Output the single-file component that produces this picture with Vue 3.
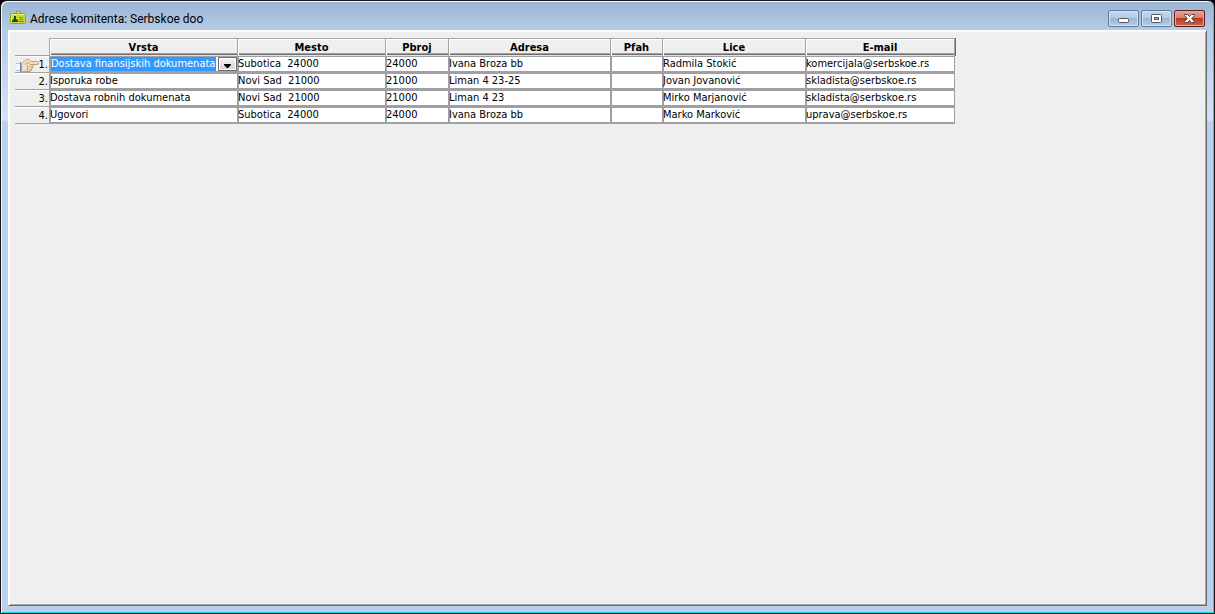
<script setup>
import { ref } from 'vue'

const columns = [
  { key: 'vrsta', label: 'Vrsta' },
  { key: 'mesto', label: 'Mesto' },
  { key: 'pbroj', label: 'Pbroj' },
  { key: 'adresa', label: 'Adresa' },
  { key: 'pfah', label: 'Pfah' },
  { key: 'lice', label: 'Lice' },
  { key: 'email', label: 'E-mail' },
]

const rows = ref([
  { vrsta: 'Dostava finansijskih dokumenata', mesto: 'Subotica  24000', pbroj: '24000', adresa: 'Ivana Broza bb', pfah: '', lice: 'Radmila Stokić', email: 'komercijala@serbskoe.rs' },
  { vrsta: 'Isporuka robe', mesto: 'Novi Sad  21000', pbroj: '21000', adresa: 'Liman 4 23-25', pfah: '', lice: 'Jovan Jovanović', email: 'skladista@serbskoe.rs' },
  { vrsta: 'Dostava robnih dokumenata', mesto: 'Novi Sad  21000', pbroj: '21000', adresa: 'Liman 4 23', pfah: '', lice: 'Mirko Marjanović', email: 'skladista@serbskoe.rs' },
  { vrsta: 'Ugovori', mesto: 'Subotica  24000', pbroj: '24000', adresa: 'Ivana Broza bb', pfah: '', lice: 'Marko Marković', email: 'uprava@serbskoe.rs' },
])
const active = 0
</script>

<template>
  <div class="window">
    <header class="titlebar">
      <svg class="app-icon" width="17" height="15" viewBox="0 0 17 15" aria-hidden="true">
        <path d="M6.500 4V1.500H10.500V4" fill="#e8ee8c" stroke="#8f9e1c" />
        <rect x=".5" y="3.500" width="15" height="10" rx="1" fill="#c6d92c" stroke="#93a51d" />
        <path d="M1.500 12.500V4.500H14.500" fill="none" stroke="#e6ef72" />
        <path d="M2 12V10L4 9V6H6V9L8 10V12Z" fill="#21451c" />
        <path d="M9 7.500H13M9 9.500H13M9 11.500H14" stroke="#6f8c22" />
      </svg>
      <h1>Adrese komitenta: Serbskoe doo</h1>
      <div class="controls">
        <button type="button" aria-label="Minimize">
          <svg width="13" height="13" viewBox="0 0 13 13"><rect x="1.500" y="6.500" width="10" height="4" rx="1" fill="#fff" stroke="#53565f" /></svg>
        </button>
        <button type="button" aria-label="Maximize">
          <svg width="13" height="13" viewBox="0 0 13 13">
            <rect x="1.500" y="2.500" width="10" height="8" rx="1" fill="#fff" stroke="#53565f" />
            <rect x="4.500" y="5.500" width="4" height="2" fill="#9ab6d6" stroke="#53565f" />
          </svg>
        </button>
        <button type="button" class="close" aria-label="Close">
          <svg width="13" height="13" viewBox="0 0 13 13">
            <path d="M1.500 2.500H4.500L6.500 4.500L8.500 2.500H11.500V3.500L8.700 6.500L11.500 9.500V10.500H8.500L6.500 8.500L4.500 10.500H1.500V9.500L4.300 6.500L1.500 3.500Z" fill="#fff" stroke="#53404a" />
          </svg>
        </button>
      </div>
    </header>

    <main class="client">
      <table>
        <colgroup>
          <col class="w-num" />
          <col v-for="c in columns" :key="c.key" :class="'w-' + c.key" />
        </colgroup>
        <thead>
          <tr>
            <td class="corner"></td>
            <th v-for="c in columns" :key="c.key" scope="col">{{ c.label }}</th>
          </tr>
        </thead>
        <tbody>
          <tr v-for="(row, i) in rows" :key="i">
            <th scope="row">
              <div class="num">
                <svg v-if="i === active" width="23" height="14" viewBox="0 0 23 14" aria-hidden="true">
                  <path d="M0 5H4V13H0Z" fill="#f4f8ff" />
                  <path d="M0 5.500H4M0 12.500H4" stroke="#a9c3e6" />
                  <path d="M4.500 4V14" stroke="#5d86c4" />
                  <path d="M5.500 5.500L9 2.500L10 1.500H13L15 3.500H21L22.500 4.500V6L21 6.500H16.500L17.500 8L16.500 9L16.500 10.500L15.500 11V12.500L14 13.500H5.500Z" fill="#f3dfbb" stroke="#bda179" />
                  <path d="M9 6.500L12 4.500L14 6.500H17M11.500 7V13M13 9H16.500M13 11.500H15.500" fill="none" stroke="#bda179" />
                </svg>
                <span>{{ i + 1 }}.</span>
              </div>
            </th>
            <td v-for="c in columns" :key="c.key">
              <div v-if="i === active && c.key === 'vrsta'" class="combo">
                <input v-model="row.vrsta" type="text" aria-label="Vrsta" />
                <button type="button" aria-label="Otvori listu">
                  <svg width="7" height="4" viewBox="0 0 7 4"><path d="M0 0H7V1L4 4H3L0 1Z" fill="#000" /></svg>
                </button>
              </div>
              <template v-else>{{ row[c.key] }}</template>
            </td>
          </tr>
        </tbody>
      </table>
    </main>
  </div>
</template>

<style>
body {
  background: #000;
}
</style>

<style scoped>
.window {
  box-sizing: border-box;
  min-height: 100vh;
  display: flex;
  flex-direction: column;
  padding: 0 7px 7px;
  border: 1px solid #16181c;
  border-radius: 7px 7px 0 0;
  background: linear-gradient(#9ab4d3 0, #b5cce6 30px, #d3e3f4 119px, #b9d1ea 121px);
  box-shadow: inset 1px 1px #f2f8fe, inset -1px -1px #24cdf2;
  font-family: "DejaVu Sans Condensed", "DejaVu Sans", sans-serif;
  font-size: 11px;
  color: #000;
}
.titlebar {
  display: flex;
  align-items: center;
  height: 29px;
  padding: 0 2px;
}
.app-icon {
  margin-top: 4px;
}
h1 {
  flex: 1;
  margin: 6px 0 0 3px;
  font: 400 12px/16px Roboto, sans-serif;
}
.controls {
  display: flex;
  gap: 2px;
  padding-top: 6px;
}
.controls button {
  display: grid;
  place-items: center;
  box-sizing: border-box;
  width: 31px;
  height: 17px;
  padding: 0;
  border: 1px solid #5f7b9c;
  border-radius: 2px;
  background: linear-gradient(#c3d6ec 0, #b4cae4 50%, #9bb6d5 50%, #b5cee9);
  box-shadow: inset 0 0 0 1px #d3e3f5;
}
.controls .close {
  border-color: #5e1f21;
  background: linear-gradient(#e3a398 0, #d27d6d 50%, #b93a22 50%, #cf6648);
  box-shadow: inset 0 0 0 1px #e5aaa0;
}
.client {
  flex: 1;
  padding: 7px 6px;
  border: 1px solid;
  border-color: #fff #696969 #696969 #fff;
  background: #efefef;
  box-shadow: inset 1px 1px #f8f8f8, inset -1px -1px #a9a8a0;
}
table {
  width: 940px;
  table-layout: fixed;
  border-collapse: separate;
  border-spacing: 0;
}
.w-num { width: 34px; }
.w-vrsta { width: 188px; }
.w-mesto { width: 148px; }
.w-pbroj { width: 63px; }
.w-adresa { width: 162px; }
.w-pfah { width: 52px; }
.w-lice { width: 143px; }
.w-email { width: 150px; }
th,
td {
  box-sizing: border-box;
  height: 17px;
  padding: 0;
  line-height: 14px;
  overflow: hidden;
  white-space: pre;
}
thead th {
  height: 18px;
  border-left: 1px solid #a0a0a0;
  border-top: 1px solid #a9a9a9;
  background: linear-gradient(to top, #e4e4e4 1px, #6e6e6e 1px, #6e6e6e 2px, #a0a0a0 2px, #a0a0a0 3px, #efefef 3px);
  box-shadow: inset 1px 1px #fff;
  font-weight: 700;
}
thead th:last-child {
  border-right: 1px solid #a0a0a0;
  box-shadow: inset 1px 1px #fff, 1px 0 #696969;
}
thead .corner {
  height: 18px;
  border-bottom: 1px solid #a0a0a0;
}
tbody td {
  border-left: 1px solid #a0a0a4;
  border-top: 1px solid #a0a0a4;
  border-bottom: 2px solid #a0a0a4;
  background: #fff;
  box-shadow: inset 1px 0 #a0a0a4;
}
tbody td:last-child {
  border-right: 1px solid #a0a0a4;
}
tbody th {
  border-bottom: 1px solid #a0a0a0;
  box-shadow: inset 0 1px #fff;
  font-weight: 400;
}
.num {
  display: flex;
  justify-content: flex-end;
  align-items: flex-end;
  height: 16px;
  padding-right: 1px;
}
.combo {
  display: flex;
  justify-content: space-between;
  height: 14px;
  padding-left: 1px;
}
.combo input {
  box-sizing: border-box;
  width: 165px;
  height: 14px;
  padding: 0;
  border: 0;
  border-right: 1px solid #c8702a;
  background: #3399ff;
  color: #fff;
  font: inherit;
}
.combo button {
  display: grid;
  place-items: center;
  box-sizing: border-box;
  width: 19px;
  height: 14px;
  padding: 3px 0 0;
  border: 1px solid #707070;
  background: linear-gradient(#f4f4f4, #d2d2d2);
  box-shadow: inset 0 0 0 1px #fff;
}
</style>
